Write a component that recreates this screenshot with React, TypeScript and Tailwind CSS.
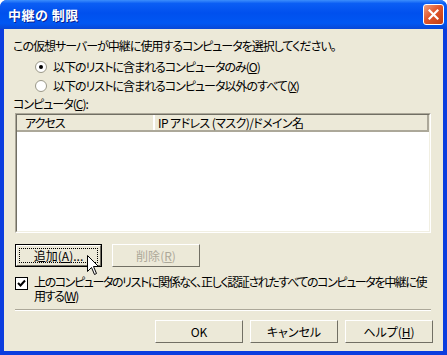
import React from "react";

const font = { fontFamily: '"Noto Sans CJK JP", "Noto Sans", sans-serif' };

function Key({ k }: { k: string }) {
  return (
    <>
      (<span className="underline underline-offset-[1px]">{k}</span>)
    </>
  );
}

function Radio({ checked }: { checked?: boolean }) {
  return (
    <div className="w-[12px] h-[12px] rounded-full border border-[#9a9888] bg-white flex items-center justify-center shrink-0">
      {checked && <div className="w-[4px] h-[4px] rounded-full bg-black" />}
    </div>
  );
}

function Btn({
  children,
  w = "w-[87px]",
  focus,
  disabled,
}: {
  children: React.ReactNode;
  w?: string;
  focus?: boolean;
  disabled?: boolean;
}) {
  return (
    <div className={`${w} h-[23px] ${focus ? "border border-black" : ""} flex`}>
      <div className="flex-1 border-t border-l border-t-white border-l-white border-b border-r border-b-[#716f64] border-r-[#716f64] bg-[#ece9d8] flex items-center justify-center">
        <div
          className={`flex-1 mx-[2px] h-[15px] flex items-center justify-center text-[12px] leading-none ${
            focus ? "border border-dotted border-black" : ""
          } ${disabled ? "text-[#aca899]" : "text-black"}`}
        >
          {children}
        </div>
      </div>
    </div>
  );
}

export default function App() {
  return (
    <div
      className="relative w-[447px] h-[355px] bg-[#0b3ddf] rounded-t-[7px] overflow-hidden flex flex-col select-none [font-feature-settings:'palt']"
      style={font}
    >
      {/* Title bar */}
      <div className="h-[29px] shrink-0 flex items-center justify-between pl-[8px] pr-[3px] bg-[linear-gradient(180deg,#3c8efc_0%,#0b5ef4_12%,#0050ee_45%,#0057f3_80%,#0847d6_100%)]">
        <span className="text-white font-bold text-[13px] tracking-[0.5px] [text-shadow:1px_1px_0_#0a1f8f]">
          中継の 制限
        </span>
        <div className="w-[21px] h-[21px] rounded-[3px] border border-white bg-[linear-gradient(135deg,#f0a080_0%,#e0562c_45%,#c23d12_100%)] flex items-center justify-center">
          <svg width="11" height="11" viewBox="0 0 11 11">
            <path d="M1.5 1.5 L9.5 9.5 M9.5 1.5 L1.5 9.5" stroke="white" strokeWidth="2.2" strokeLinecap="square" />
          </svg>
        </div>
      </div>

      {/* Body */}
      <div className="flex-1 mx-[4px] mb-[4px] bg-[#ece9d8] pt-[10px] text-[12px] leading-[14px] text-black whitespace-nowrap tracking-[-1px]">
        <div className="pl-[9px]">この仮想サーバーが中継に使用するコンピュータを選択してください。</div>

        <div className="mt-[7px] pl-[31px] flex items-center gap-[6px] h-[14px]">
          <Radio checked />
          <span>
            以下のリストに含まれるコンピュータのみ<Key k="O" />
          </span>
        </div>
        <div className="mt-[5px] pl-[31px] flex items-center gap-[6px] h-[14px]">
          <Radio />
          <span>
            以下のリストに含まれるコンピュータ以外のすべて<Key k="X" />
          </span>
        </div>

        <div className="mt-[4px] pl-[9px]">
          コンピュータ<Key k="C" />:
        </div>

        {/* List view */}
        <div className="mt-[2px] ml-[11px] w-[416px] h-[120px] border border-t-[#aca899] border-l-[#aca899] border-b-white border-r-white">
          <div className="h-full border border-t-[#716f64] border-l-[#716f64] border-b-[#f1efe2] border-r-[#f1efe2] bg-white">
            <div className="h-[17px] flex bg-[#ece9d8] border-b-2 border-b-[#aca899]">
              <div className="w-[138px] pl-[8px] flex items-center border-r-2 border-r-white">アクセス</div>
              <div className="flex-1 pl-[3px] flex items-center border-r-2 border-r-[#aca899] tracking-[-0.6px]">
                IP アドレス (マスク)/ドメイン名
              </div>
            </div>
          </div>
        </div>

        <div className="mt-[11px] ml-[11px] flex gap-[10px] tracking-normal">
          <Btn focus w="w-[87px]">
            追加<Key k="A" />...
          </Btn>
          <Btn disabled w="w-[88px]">
            削除<Key k="R" />
          </Btn>
        </div>

        <div className="mt-[8px] ml-[11px] flex items-start gap-[6px]">
          <div className="mt-[2px] w-[13px] h-[13px] border border-black bg-white flex items-center justify-center shrink-0">
            <svg width="9" height="9" viewBox="0 0 9 9">
              <path d="M1 4 L3.5 6.5 L8 1.5" stroke="black" strokeWidth="2" fill="none" />
            </svg>
          </div>
          <div className="leading-[14px] tracking-[-1.4px]">
            上のコンピュータのリストに関係なく、正しく認証されたすべてのコンピュータを中継に使
            <br />
            用する<Key k="W" />
          </div>
        </div>

        <div className="mt-[6px] ml-[11px] w-[416px] border-t border-t-[#aca899] border-b border-b-white" />

        <div className="mt-[9px] ml-[151px] flex gap-[7px] tracking-normal">
          <Btn w="w-[88px]">OK</Btn>
          <Btn w="w-[88px]">キャンセル</Btn>
          <Btn w="w-[88px]">
            ヘルプ<Key k="H" />
          </Btn>
        </div>
      </div>

      {/* Mouse pointer */}
      <svg className="absolute left-[87px] top-[255px]" width="13" height="21" viewBox="0 0 13 21">
        <path
          d="M0.5 0.5 L0.5 16.5 L4.5 12.5 L7.5 19.5 L9.5 18.5 L6.5 11.5 L11.5 11.5 Z"
          fill="white"
          stroke="black"
          strokeWidth="1"
          strokeLinejoin="miter"
        />
      </svg>
    </div>
  );
}
